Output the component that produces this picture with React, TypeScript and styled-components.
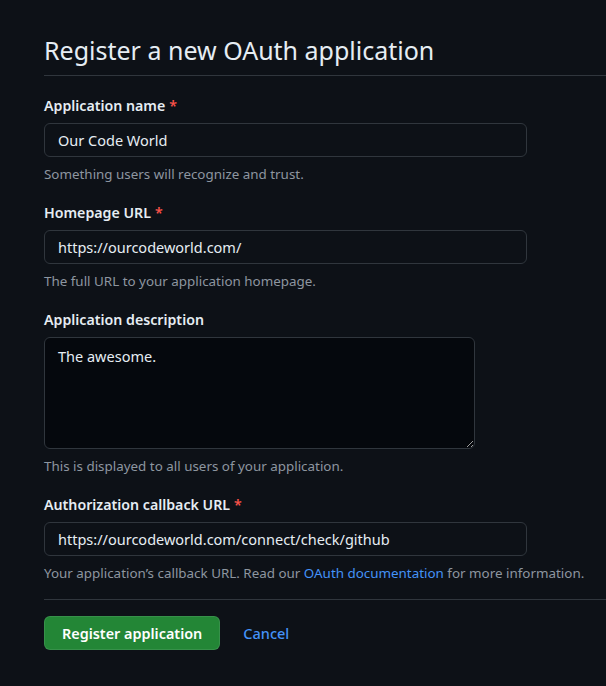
import React from "react";
import styled, { createGlobalStyle } from "styled-components";

const GlobalStyle = createGlobalStyle`
  html, body {
    margin: 0;
    padding: 0;
    background: #0d1117;
  }
  body {
    font-family: "Noto Sans", "Open Sans", sans-serif;
    color: #e6edf3;
    overflow: hidden;
  }
`;

const Page = styled.main`
  padding: 32px 0 0 44px;
  width: 562px;
`;

const Subhead = styled.div`
  border-bottom: 1px solid #30363d;
  padding-bottom: 7px;
  margin-bottom: 20px;
`;

const Heading = styled.h1`
  margin: 0;
  font-size: 25px;
  font-weight: 400;
  line-height: 36px;
  color: #e6edf3;
`;

const FormGroup = styled.div<{ $last?: boolean }>`
  margin-bottom: ${(p) => (p.$last ? "0" : "20px")};
`;

const Label = styled.label`
  display: block;
  font-size: 14.2px;
  font-weight: 600;
  line-height: 20px;
  margin-bottom: 7px;
  color: #e6edf3;
`;

const Required = styled.span`
  color: #f85149;
  margin-left: 4px;
`;

const TextInput = styled.input`
  display: block;
  box-sizing: border-box;
  width: 483px;
  height: 34px;
  padding: 0 13px;
  font-family: inherit;
  font-size: 14.5px;
  color: #e6edf3;
  background: #0d1117;
  border: 1px solid #30363d;
  border-radius: 6px;
  outline: none;
`;

const TextArea = styled.textarea`
  display: block;
  box-sizing: border-box;
  width: 431px;
  height: 112px;
  padding: 8px 13px;
  font-family: inherit;
  font-size: 14.5px;
  line-height: 20px;
  color: #e6edf3;
  background: #05080d;
  border: 1px solid #30363d;
  border-radius: 6px;
  outline: none;
  resize: vertical;
`;

const Note = styled.p`
  margin: 8px 0 0;
  font-size: 13.4px;
  line-height: 18px;
  color: #8d96a0;
`;

const Link = styled.a`
  color: #4493f8;
  text-decoration: none;
`;

const Divider = styled.hr`
  border: 0;
  border-top: 1px solid #30363d;
  margin: 17px 0 16px;
`;

const Actions = styled.div`
  display: flex;
  align-items: center;
  gap: 23px;
`;

const PrimaryButton = styled.button`
  height: 34px;
  padding: 0 17px;
  font-family: inherit;
  font-size: 14.4px;
  font-weight: 600;
  color: #ffffff;
  background: #238636;
  border: 1px solid rgba(240, 246, 252, 0.1);
  border-radius: 6px;
  cursor: pointer;
`;

const CancelLink = styled(Link)`
  font-size: 14.5px;
  font-weight: 500;
`;

export default function App() {
  return (
    <>
      <GlobalStyle />
      <Page>
        <Subhead>
          <Heading>Register a new OAuth application</Heading>
        </Subhead>

        <FormGroup>
          <Label>
            Application name<Required>*</Required>
          </Label>
          <TextInput defaultValue="Our Code World" />
          <Note>Something users will recognize and trust.</Note>
        </FormGroup>

        <FormGroup>
          <Label>
            Homepage URL<Required>*</Required>
          </Label>
          <TextInput defaultValue="https://ourcodeworld.com/" />
          <Note>The full URL to your application homepage.</Note>
        </FormGroup>

        <FormGroup>
          <Label>Application description</Label>
          <TextArea defaultValue="The awesome." spellCheck={false} />
          <Note>This is displayed to all users of your application.</Note>
        </FormGroup>

        <FormGroup $last>
          <Label>
            Authorization callback URL<Required>*</Required>
          </Label>
          <TextInput defaultValue="https://ourcodeworld.com/connect/check/github" />
          <Note>
            Your application’s callback URL. Read our{" "}
            <Link href="#">OAuth documentation</Link> for more information.
          </Note>
        </FormGroup>

        <Divider />

        <Actions>
          <PrimaryButton>Register application</PrimaryButton>
          <CancelLink href="#">Cancel</CancelLink>
        </Actions>
      </Page>
    </>
  );
}
